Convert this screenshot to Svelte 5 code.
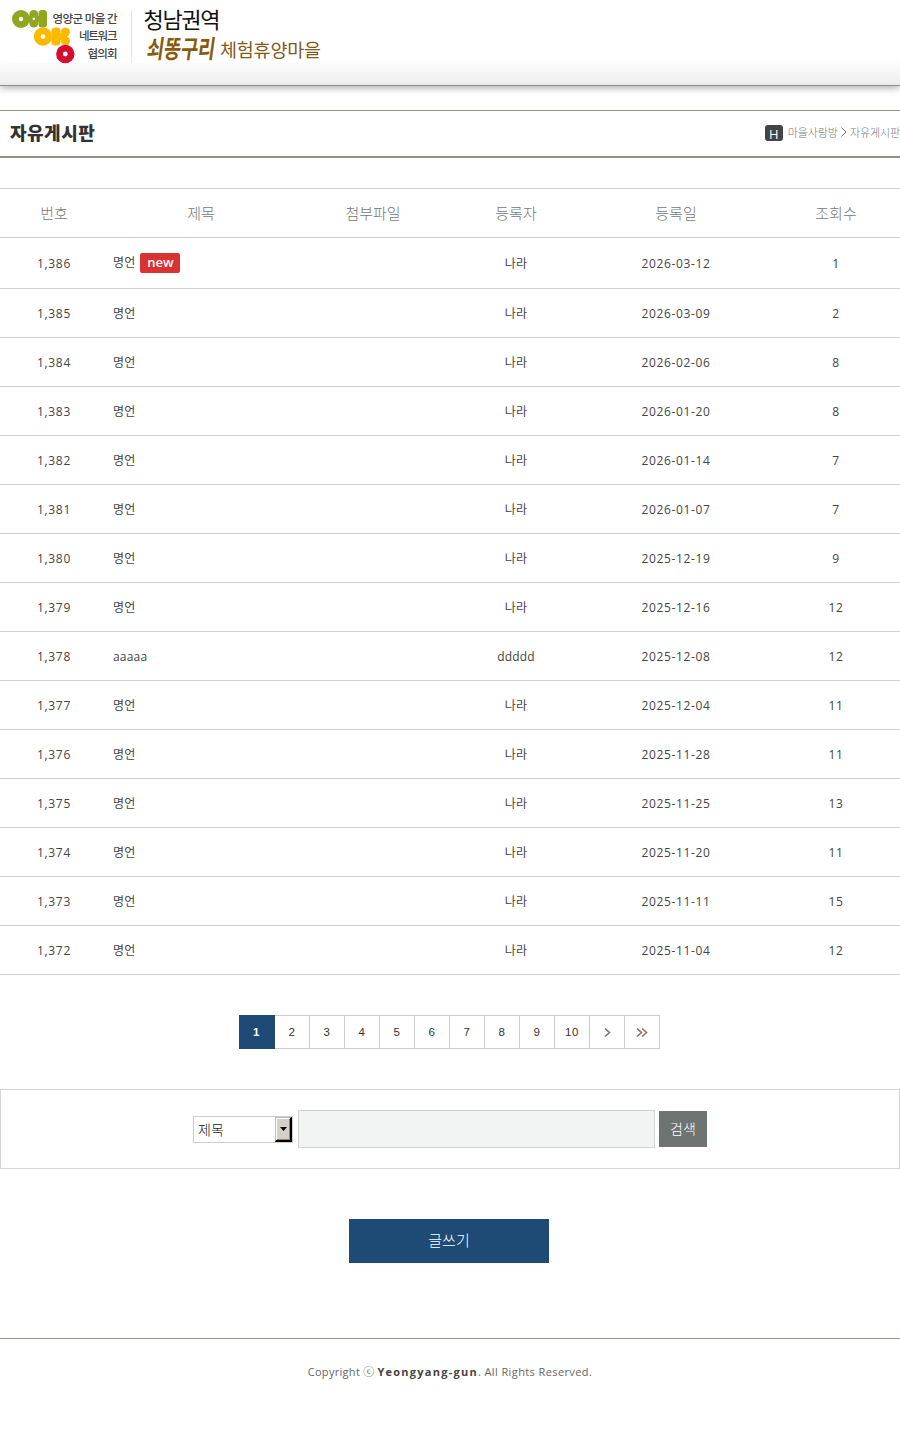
<script lang="ts">
  type Post = { no: string; title: string; author: string; date: string; hits: number; isNew?: boolean };

  const columns = ['번호', '제목', '첨부파일', '등록자', '등록일', '조회수'];

  const posts: Post[] = [
    { no: '1,386', title: '명언', author: '나라', date: '2026-03-12', hits: 1, isNew: true },
    { no: '1,385', title: '명언', author: '나라', date: '2026-03-09', hits: 2 },
    { no: '1,384', title: '명언', author: '나라', date: '2026-02-06', hits: 8 },
    { no: '1,383', title: '명언', author: '나라', date: '2026-01-20', hits: 8 },
    { no: '1,382', title: '명언', author: '나라', date: '2026-01-14', hits: 7 },
    { no: '1,381', title: '명언', author: '나라', date: '2026-01-07', hits: 7 },
    { no: '1,380', title: '명언', author: '나라', date: '2025-12-19', hits: 9 },
    { no: '1,379', title: '명언', author: '나라', date: '2025-12-16', hits: 12 },
    { no: '1,378', title: 'aaaaa', author: 'ddddd', date: '2025-12-08', hits: 12 },
    { no: '1,377', title: '명언', author: '나라', date: '2025-12-04', hits: 11 },
    { no: '1,376', title: '명언', author: '나라', date: '2025-11-28', hits: 11 },
    { no: '1,375', title: '명언', author: '나라', date: '2025-11-25', hits: 13 },
    { no: '1,374', title: '명언', author: '나라', date: '2025-11-20', hits: 11 },
    { no: '1,373', title: '명언', author: '나라', date: '2025-11-11', hits: 15 },
    { no: '1,372', title: '명언', author: '나라', date: '2025-11-04', hits: 12 },
  ];

  const pages = [1, 2, 3, 4, 5, 6, 7, 8, 9, 10];

  let page = $state(1);
  let keyword = $state('');
</script>

<header class="top">
  <svg class="logo" width="330" height="66" viewBox="0 0 330 66">
    <rect x="10" y="8" width="312" height="55" fill="#fff" />
    <!-- green mark -->
    <g fill="#8fa61e">
      <circle cx="21" cy="19" r="9" />
      <circle cx="33.800" cy="14.500" r="4.500" />
      <circle cx="33.800" cy="23" r="4.500" />
      <rect x="28" y="16" width="12" height="6" />
      <rect x="38.500" y="10" width="8.500" height="17.500" rx="3.500" />
    </g>
    <circle cx="21" cy="19" r="2.200" fill="#fff" />
    <circle cx="33.800" cy="18.800" r="1.300" fill="#fff" />
    <!-- yellow mark -->
    <g fill="#fbba00">
      <circle cx="43" cy="36.500" r="9.200" />
      <rect x="51.500" y="27.500" width="9" height="18" rx="3.500" />
      <circle cx="65.500" cy="32" r="4.500" />
      <circle cx="65.500" cy="41" r="4.500" />
      <rect x="58" y="33" width="9" height="7" />
    </g>
    <circle cx="43" cy="36.500" r="2.200" fill="#fff" />
    <!-- red mark -->
    <circle cx="65.300" cy="54" r="9.200" fill="#d70c2e" />
    <circle cx="65.300" cy="54" r="2.400" fill="#fff" />
    <g class="org">
      <text x="52.500" y="22.500" textLength="65">영양군 마을 간</text>
      <text x="79" y="40" textLength="38.500">네트워크</text>
      <text x="87.500" y="57.500" textLength="30">협의회</text>
    </g>
    <path d="M131.500 10V63" stroke="#e4e4e4" />
    <text class="area" x="143.500" y="28" textLength="77">청남권역</text>
    <text class="brush" transform="translate(146 57.500) skewX(-8) scale(.74 1)" textLength="92">쇠똥구리</text>
    <text class="village" x="220" y="57" textLength="101">체험휴양마을</text>
  </svg>
</header>

<section class="title-bar">
  <h1>자유게시판</h1>
  <div class="crumbs">
    <span class="home">H</span>
    <span>마을사랑방</span>
    <svg width="6" height="12" viewBox="0 0 6 12"><path d="M.5 1.500L5 6L.5 10.500" fill="none" stroke="#666" /></svg>
    <span>자유게시판</span>
  </div>
</section>

<table>
  <colgroup>
    <col class="c-no" /><col class="c-title" /><col class="c-file" />
    <col class="c-author" /><col class="c-date" /><col class="c-hits" />
  </colgroup>
  <thead>
    <tr>
      {#each columns as column}
        <th>{column}</th>
      {/each}
    </tr>
  </thead>
  <tbody>
    {#each posts as post}
      <tr class:fresh={post.isNew}>
        <td>{post.no}</td>
        <td class="subject">
          <span class="ko">{post.title}</span>{#if post.isNew}<span class="new">new</span>{/if}
        </td>
        <td></td>
        <td class="ko">{post.author}</td>
        <td>{post.date}</td>
        <td>{post.hits}</td>
      </tr>
    {/each}
  </tbody>
</table>

<nav class="pager">
  {#each pages as n}
    <button class:on={page === n} onclick={() => (page = n)}>{n}</button>
  {/each}
  <button aria-label="다음">
    <svg width="7" height="9" viewBox="0 0 7 9"><path d="M1 .5L5.500 4.500L1 8.500" /></svg>
  </button>
  <button aria-label="마지막">
    <svg width="12" height="9" viewBox="0 0 12 9"><path d="M1 .5L5.500 4.500L1 8.500M6 .5L10.500 4.500L6 8.500" /></svg>
  </button>
</nav>

<form class="search">
  <div class="select">
    <span>제목</span>
    <i><svg width="7" height="4" viewBox="0 0 7 4"><path d="M0 0H7L3.500 4Z" /></svg></i>
  </div>
  <input type="text" bind:value={keyword} />
  <button type="button">검색</button>
</form>

<button class="write">글쓰기</button>

<footer>
  <p><span class="c1">Copyright ⓒ</span> <b>Yeongyang-gun</b><span class="c2">. All Rights Reserved.</span></p>
</footer>

<style>
  :global(body) {
    background: #fff;
    color: #444;
    font-family: 'Open Sans', 'Noto Sans CJK KR', sans-serif;
    font-size: 12px;
  }

  button {
    padding: 0;
    border: 0;
    font-family: inherit;
    cursor: pointer;
  }

  .top {
    height: 85px;
    border-bottom: 1px solid #909090;
    background: linear-gradient(#fff 58px, #f0f0f0 82px, #e9e9e9);
    box-shadow: 0 1px 8px rgba(0, 0, 0, 0.4);
  }

  .logo {
    display: block;
  }

  .logo text {
    font-family: 'Noto Sans CJK KR', sans-serif;
  }

  .org text {
    font-size: 11.5px;
    font-weight: 500;
    fill: #444;
  }

  .logo .area {
    font-size: 22px;
    fill: #111;
  }

  .logo .brush {
    font-size: 25px;
    font-weight: 700;
    fill: #875a0c;
  }

  .logo .village {
    font-size: 18.5px;
    fill: #80591c;
  }

  .title-bar {
    display: flex;
    align-items: center;
    justify-content: space-between;
    height: 45px;
    margin-top: 24px;
    border-top: 1px solid #978f86;
    border-bottom: 2px solid #978f86;
  }

  h1 {
    margin: -3px 0 0 10px;
    font-family: 'Noto Sans CJK KR', sans-serif;
    font-size: 18px;
    font-weight: 900;
    letter-spacing: 0.5px;
    color: #333;
  }

  .crumbs {
    display: flex;
    align-items: center;
    font-family: 'Noto Sans CJK KR', sans-serif;
    font-size: 11px;
    font-weight: 300;
    letter-spacing: -0.1px;
    line-height: 16px;
    color: #777;
    margin-top: -4px;
  }

  .crumbs svg {
    margin: 0 3px;
  }

  .home {
    width: 18px;
    height: 16px;
    margin: 2px 5px 0 0;
    border-radius: 3px;
    background: #444;
    color: #fff;
    font-family: 'Open Sans', sans-serif;
    font-size: 13px;
    font-weight: 400;
    line-height: 18px;
    text-align: center;
  }

  table {
    width: 900px;
    margin-top: 30px;
    border-top: 1px solid #d0d0d0;
    border-spacing: 0;
    table-layout: fixed;
  }

  .c-no { width: 108px; }
  .c-title { width: 186px; }
  .c-file { width: 158px; }
  .c-author { width: 128px; }
  .c-date { width: 192px; }
  .c-hits { width: 128px; }

  th,
  td {
    box-sizing: border-box;
    height: 49px;
    padding: 0;
    border-bottom: 1px solid #d0d0d0;
    text-align: center;
    line-height: 20px;
  }

  th {
    padding-bottom: 1px;
    font-family: 'Noto Sans CJK KR', sans-serif;
    font-size: 15px;
    font-weight: 300;
    color: #777;
  }

  td {
    padding-top: 2px;
    letter-spacing: 0.65px;
  }

  .fresh td {
    height: 51px;
  }

  .subject {
    padding-left: 5px;
    text-align: left;
  }

  .fresh .subject {
    padding-top: 0;
  }

  .ko {
    font-size: 12px;
    letter-spacing: 0.2px;
  }

  .new {
    display: inline-block;
    width: 40px;
    height: 20px;
    margin-left: 5px;
    border-radius: 2px;
    background: #d83232;
    color: #fff;
    font-size: 13px;
    font-weight: 600;
    letter-spacing: 0;
    line-height: 18px;
    text-align: center;
    vertical-align: middle;
  }

  .pager {
    display: flex;
    width: 421px;
    margin: 40px 0 0 239px;
  }

  .pager button {
    display: flex;
    align-items: center;
    justify-content: center;
    box-sizing: border-box;
    width: 35px;
    height: 34px;
    border: solid #ccc;
    border-width: 1px 1px 1px 0;
    background: #fff;
    color: #333;
    font-family: 'Liberation Sans', sans-serif;
    font-size: 11.5px;
    letter-spacing: 0.6px;
  }

  .pager button:first-child {
    width: 36px;
  }

  .pager .on {
    border-color: #1d4b75;
    background: #1d4b75;
    color: #fff;
    font-weight: 700;
  }

  .pager path {
    fill: none;
    stroke: #85796f;
    stroke-width: 1.6;
  }

  .search {
    display: flex;
    align-items: center;
    box-sizing: border-box;
    height: 80px;
    margin-top: 40px;
    padding-left: 192px;
    border: 1px solid #d3d3d3;
  }

  .select {
    display: flex;
    justify-content: space-between;
    box-sizing: border-box;
    width: 100px;
    height: 27px;
    margin: 1px 5px 0 0;
    border: 1px solid #ccc;
    padding-left: 4px;
    font-size: 14px;
    font-weight: 300;
    line-height: 25px;
    color: #222;
  }

  .select i {
    display: flex;
    align-items: center;
    justify-content: center;
    box-sizing: border-box;
    width: 17px;
    height: 25px;
    border: solid #000;
    border-width: 1px 2px 2px 1px;
    border-color: #bbb #000 #000 #bbb;
    background: #d4d0c8;
    box-shadow: inset 1px 1px #fff, inset -1px -1px #888;
  }

  .search input {
    box-sizing: border-box;
    width: 357px;
    height: 38px;
    margin: 0 4px 0 0;
    border: 1px solid #d3d3d3;
    background: #f2f4f4;
  }

  .search button {
    width: 48px;
    height: 36px;
    padding-bottom: 3px;
    background: #6e7471;
    color: #fff;
    font-size: 14px;
    font-weight: 300;
  }

  .write {
    display: block;
    width: 200px;
    height: 44px;
    margin: 50px 0 0 349px;
    padding-bottom: 3px;
    background: #1d4b75;
    color: #fff;
    font-size: 15px;
    font-weight: 300;
  }

  footer {
    margin-top: 75px;
    border-top: 1px solid #978f86;
    text-align: center;
    font-size: 11px;
    color: #666;
  }

  footer p {
    margin: 24px 0 0;
    line-height: 18px;
    white-space: nowrap;
  }

  footer b {
    color: #444;
    letter-spacing: 1.25px;
  }

  .c1 {
    letter-spacing: 0.3px;
  }

  .c2 {
    letter-spacing: 0.4px;
  }
</style>
